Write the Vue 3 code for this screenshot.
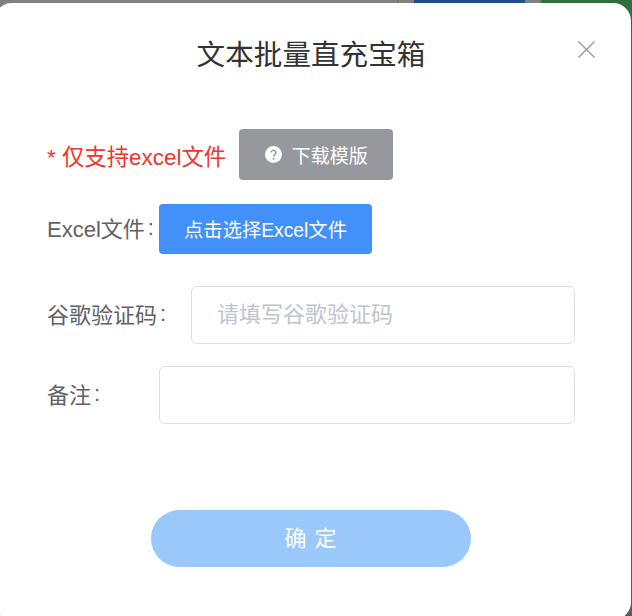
<script setup>
const fields = [
  { label: '谷歌验证码', placeholder: '请填写谷歌验证码', short: false },
  { label: '备注', placeholder: '', short: true }
]
</script>

<template>
  <div class="page">
    <div class="backdrop">
      <span class="strip-gray"></span>
      <span class="strip-line"></span>
      <span class="strip-blue"></span>
      <span class="strip-green"></span>
    </div>
    <div class="dialog">
      <header class="head">
        <h1 class="title">文本批量直充宝箱</h1>
        <svg class="close" viewBox="0 0 17 17" width="17" height="17" aria-label="关闭">
          <path d="M0.5 0.5 L16.5 16.5 M16.5 0.5 L0.5 16.5" />
        </svg>
      </header>
      <div class="notice-row">
        <span class="notice">* 仅支持excel文件</span>
        <button class="download" type="button">
          <svg class="help" viewBox="0 0 16 16" width="17" height="17">
            <circle cx="8" cy="8" r="8" fill="#fff" />
            <path d="M5.8 6.2a2.2 2.2 0 1 1 3.4 1.9c-.8.5-1.2.9-1.2 1.7" fill="none" stroke="#97989d" stroke-width="1.5" />
            <circle cx="8" cy="12" r="1" fill="#97989d" />
          </svg>
          下载模版
        </button>
      </div>
      <div class="file-row">
        <span class="label file-label">Excel文件<span class="colon">:</span></span>
        <button class="choose" type="button">点击选择Excel文件</button>
      </div>
      <div class="fields">
        <label v-for="f in fields" :key="f.label" class="field">
          <span class="label field-label" :class="{ short: f.short }">{{ f.label }}<span class="colon">:</span></span>
          <input class="input" type="text" :placeholder="f.placeholder" />
        </label>
      </div>
      <button class="confirm" type="button">确 定</button>
    </div>
  </div>
</template>

<style scoped>
.page {
  position: relative;
  width: 632px;
  height: 616px;
  overflow: hidden;
  background: #5c5c5c;
  font-family: "Liberation Sans", "Noto Sans CJK SC", sans-serif;
}
.backdrop span {
  position: absolute;
  top: 0;
  height: 8px;
}
.backdrop .strip-gray { left: 0; width: 632px; background: #808080; }
.backdrop .strip-line { left: 397px; width: 1px; background: #6e6e6e; }
.backdrop .strip-blue { left: 414px; width: 111px; background: #1f4e8c; }
.backdrop .strip-green { left: 541px; width: 91px; height: 30px; background: #2f6f3e; }
.dialog {
  position: absolute;
  left: -6px;
  top: 3px;
  width: 637px;
  height: 617px;
  box-sizing: border-box;
  padding: 0 56px 0 53px;
  background: #fff;
  border-radius: 18px;
}
.head {
  position: relative;
  display: flex;
  justify-content: center;
  height: 55px;
  padding-top: 34px;
  margin: 0 -56px -1px -53px;
}
.title {
  margin: 0 3px 0 0;
  font-size: 28.6px;
  line-height: 36px;
  font-weight: 400;
  color: #333;
}
.close {
  position: absolute;
  left: 584px;
  top: 38px;
  stroke: #97989d;
  stroke-width: 1.3;
  fill: none;
}
.notice-row {
  display: flex;
  align-items: center;
  gap: 13px;
  margin-top: 38px;
}
.notice {
  font-size: 22.4px;
  color: #f0352b;
  white-space: nowrap;
}
.download {
  display: flex;
  align-items: center;
  justify-content: center;
  gap: 10px;
  width: 154px;
  height: 51px;
  padding: 0;
  border: 0;
  border-radius: 4px;
  background: #97989d;
  color: #fff;
  font: inherit;
  font-size: 19px;
}
.file-row {
  display: flex;
  align-items: center;
  margin-top: 24px;
}
.label {
  padding-bottom: 4px;
  font-size: 22px;
  color: #606266;
  white-space: nowrap;
}
.colon {
  margin-left: 3px;
  vertical-align: 2px;
}
.file-label { width: 112px; flex: none; }
.choose {
  width: 213px;
  height: 50px;
  padding: 0;
  border: 0;
  border-radius: 4px;
  background: #4290f9;
  color: #fff;
  font: inherit;
  font-size: 19.3px;
}
.fields {
  display: flex;
  flex-direction: column;
  gap: 22px;
  margin-top: 32px;
}
.field {
  display: flex;
  align-items: center;
}
.field-label { width: 144px; flex: none; }
.field-label.short { width: 112px; }
.input {
  flex: 1;
  min-width: 0;
  height: 58px;
  box-sizing: border-box;
  padding: 0 25px;
  border: 1px solid #dcdfe6;
  border-radius: 6px;
  outline: none;
  font: inherit;
  font-size: 22px;
  color: #606266;
}
.input::placeholder { color: #c0c4cc; }
.confirm {
  display: block;
  width: 320px;
  height: 57px;
  margin: 86px 0 0 104px;
  padding: 0 0 5px;
  border: 0;
  border-radius: 29px;
  background: #9ac8fb;
  color: #fff;
  font: inherit;
  font-size: 22px;
  letter-spacing: 1px;
}
</style>
